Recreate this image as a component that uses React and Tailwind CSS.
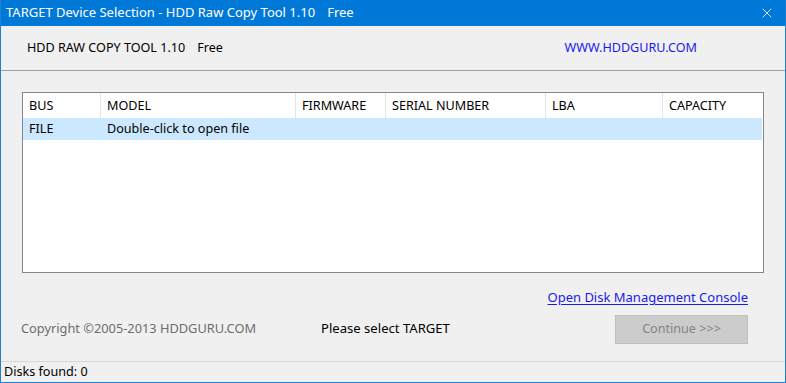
import { X } from 'lucide-react';

const cols = [
    { name: 'BUS', w: 'w-[78px]' },
    { name: 'MODEL', w: 'w-[195px]' },
    { name: 'FIRMWARE', w: 'w-[90px]' },
    { name: 'SERIAL NUMBER', w: 'w-[160px]' },
    { name: 'LBA', w: 'w-[117px]' },
    { name: 'CAPACITY', w: 'flex-1' },
];

export default function App() {
    return (
        <div className="w-[786px] h-[383px] flex flex-col bg-[#f0f0f0] border border-[#1883d7] border-t-0 text-[12.6px] text-black font-['Noto_Sans',sans-serif] overflow-hidden">
            {/* Title bar */}
            <div className="h-[26px] shrink-0 bg-[#0078d7] text-white flex items-center pl-[5px] pr-[10px]">
                <span className="text-[13px]">TARGET Device Selection - HDD Raw Copy Tool 1.10</span>
                <span className="text-[13px] ml-[12px]">Free</span>
                <X className="ml-auto w-[16px] h-[16px]" strokeWidth={1.25} />
            </div>

            {/* Header */}
            <div className="h-[45px] shrink-0 flex items-center pl-[26px] border-b border-[#a0a0a0]">
                <span>HDD RAW COPY TOOL 1.10</span>
                <span className="ml-[12px]">Free</span>
                <span className="ml-auto mr-[88px] text-[#1a1aee]">WWW.HDDGURU.COM</span>
            </div>

            <div className="flex-1 flex flex-col px-[21px] pt-[21px]">
                {/* Device list */}
                <div className="h-[181px] bg-white border border-[#828790] flex flex-col">
                    <div className="h-[25px] flex">
                        {cols.map((c) => (
                            <div key={c.name} className={`${c.w} flex items-center pl-[6px] pt-[1px] border-r border-[#e5e5e5] last:border-r-0`}>
                                {c.name}
                            </div>
                        ))}
                    </div>
                    <div className="h-[22px] flex items-center bg-[#cce8ff] mr-[1px]">
                        <span className="w-[78px] pl-[6px]">FILE</span>
                        <span className="pl-[6px]">Double-click to open file</span>
                    </div>
                </div>

                <div className="flex justify-end mt-[15px] pr-[16px]">
                    <span className="text-[13px] text-[#1a1aee] underline underline-offset-2">Open Disk Management Console</span>
                </div>

                <div className="flex items-center mt-[7px]">
                    <span className="text-[12.8px] text-[#6d6d6d] w-[300px] -ml-[1px]">Copyright ©2005-2013 HDDGURU.COM</span>
                    <span className="text-[13.1px]">Please select TARGET</span>
                    <div className="ml-auto mr-[16px] w-[133px] h-[29px] bg-[#cccccc] border border-[#bfbfbf] text-[#838383] flex items-center justify-center">
                        Continue &gt;&gt;&gt;
                    </div>
                </div>
            </div>

            {/* Status bar */}
            <div className="h-[21px] shrink-0 border-t border-[#d7d7d7] flex items-center pl-[3px]">
                Disks found: 0
            </div>
        </div>
    );
}
